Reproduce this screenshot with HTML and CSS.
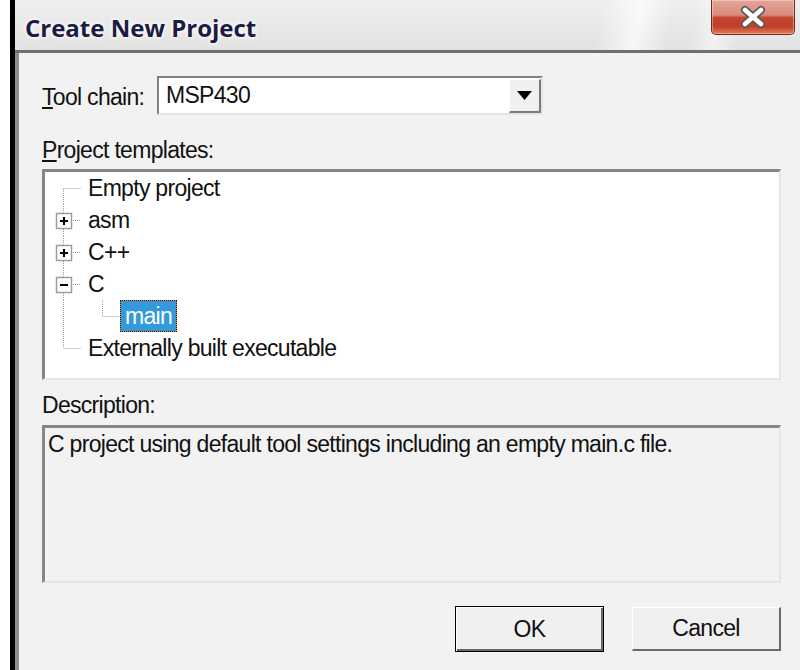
FILE: index.html
```html
<!DOCTYPE html>
<html lang="en">
<head>
<meta charset="utf-8">
<title>Create New Project</title>
<link rel="stylesheet" href="styles.css">
</head>
<body>
<div class="window">
  <div class="titlebar">
    <span class="title">Create New Project</span>
    <button class="close" aria-label="Close">
      <svg width="26" height="24" viewBox="0 0 26 24">
        <path d="M5 5 L21 19 M21 5 L5 19" stroke="#5b5b5b" stroke-width="8" stroke-linecap="round"/>
        <path d="M5 5 L21 19 M21 5 L5 19" stroke="#ffffff" stroke-width="4.5" stroke-linecap="round"/>
      </svg>
    </button>
  </div>
  <div class="separator"></div>
  <div class="content">
    <div class="field-row">
      <label class="label chain-label"><u>T</u>ool chain:</label>
      <div class="combo">
        <span class="combo-value">MSP430</span>
        <span class="combo-btn">
          <svg width="15" height="9" viewBox="0 0 15 9"><polygon points="0,0 15,0 7.5,9" fill="#000"/></svg>
        </span>
      </div>
    </div>

    <div class="label section-label"><u>P</u>roject templates:</div>
    <div class="tree">
      <div class="tree-row">
        <svg class="gutter" width="38" height="32"><path class="dots" d="M18.5 17V32 M18.5 16.5H36"/></svg>
        <span class="node">Empty project</span>
      </div>
      <div class="tree-row">
        <svg class="gutter" width="38" height="32">
          <path class="dots" d="M18.5 0V9 M18.5 25V32 M28 16.5H36"/>
          <rect class="box" x="11.5" y="9.5" width="15" height="15"/>
          <rect x="15" y="16" width="8" height="2"/><rect x="18" y="13" width="2" height="8"/>
        </svg>
        <span class="node">asm</span>
      </div>
      <div class="tree-row">
        <svg class="gutter" width="38" height="32">
          <path class="dots" d="M18.5 0V9 M18.5 25V32 M28 16.5H36"/>
          <rect class="box" x="11.5" y="9.5" width="15" height="15"/>
          <rect x="15" y="16" width="8" height="2"/><rect x="18" y="13" width="2" height="8"/>
        </svg>
        <span class="node">C++</span>
      </div>
      <div class="tree-row">
        <svg class="gutter" width="38" height="32">
          <path class="dots" d="M18.5 0V9 M18.5 25V32 M28 16.5H36"/>
          <rect class="box" x="11.5" y="9.5" width="15" height="15"/>
          <rect x="15" y="16" width="8" height="2"/>
        </svg>
        <span class="node">C</span>
      </div>
      <div class="tree-row">
        <svg class="gutter" width="75" height="32">
          <path class="dots" d="M18.5 0V32 M57.5 0V16 M57.5 16.5H75"/>
        </svg>
        <span class="node selected">main</span>
      </div>
      <div class="tree-row">
        <svg class="gutter" width="38" height="32"><path class="dots" d="M18.5 0V16 M18.5 16.5H36"/></svg>
        <span class="node">Externally built executable</span>
      </div>
    </div>

    <div class="label desc-label">Description:</div>
    <div class="desc">C project using default tool settings including an empty main.c file.</div>

    <div class="buttons">
      <button class="btn default">OK</button>
      <button class="btn">Cancel</button>
    </div>
  </div>
</div>
</body>
</html>
```

FILE: styles.css
```css
* {
  box-sizing: border-box;
}

html,
body {
  margin: 0;
  padding: 0;
  background: #ffffff;
}

body {
  width: 800px;
  height: 670px;
  overflow: hidden;
  font-family: "Liberation Sans", Arial, sans-serif;
  font-size: 23px;
  letter-spacing: -0.7px;
  color: #111111;
}

/* dialog frame */
.window {
  margin-left: 10px;
  height: 670px;
  border-left: 5px solid #000000;
  display: flex;
  flex-direction: column;
}

.titlebar {
  height: 50px;
  flex: none;
  display: flex;
  align-items: flex-start;
  padding-left: 10px;
  background:
    linear-gradient(100deg, rgba(255, 255, 255, 0) 74%, rgba(255, 255, 255, 0.7) 79%, rgba(255, 255, 255, 0) 83%),
    linear-gradient(100deg, rgba(255, 255, 255, 0) 86%, rgba(255, 255, 255, 0.55) 89%, rgba(255, 255, 255, 0) 92%),
    linear-gradient(#efefef, #e2e2e2);
}

.title {
  font-family: "Open Sans", "Noto Sans", sans-serif;
  font-weight: 700;
  font-size: 24px;
  letter-spacing: 0;
  line-height: 30px;
  padding-top: 13px;
  color: #1b1b44;
  text-shadow: 0 0 6px #ffffff, 0 0 3px #ffffff;
}

.close {
  margin-left: auto;
  margin-right: 5px;
  width: 84px;
  height: 35px;
  padding: 0;
  border: 1px solid #6d2b22;
  border-top: none;
  border-radius: 0 0 5px 5px;
  background: linear-gradient(#e4a497, #d98b7d 44%, #c5442f 52%, #c13f2a 78%, #e27b55 100%);
  box-shadow: inset 0 0 0 1px rgba(255, 255, 255, 0.35);
  display: flex;
  align-items: center;
  justify-content: center;
}

.separator {
  height: 3px;
  flex: none;
  background: #6f6f6f;
}

.content {
  flex: 1;
  background: #f2f2f2;
  border-left: 4px solid #8c8c8c;
  padding: 23px 19px 0 23px;
}

/* labels */
.label {
  display: block;
  line-height: 26px;
  white-space: nowrap;
}

.field-row {
  display: flex;
  align-items: center;
  height: 39px;
}

.chain-label {
  flex: none;
  width: 115px;
  padding-top: 3px;
}

.combo {
  width: 386px;
  height: 39px;
  display: flex;
  background: #ffffff;
  border-style: solid;
  border-width: 2px;
  border-color: #828282 #e4e4e4 #e4e4e4 #828282;
}

.combo-value {
  flex: 1;
  line-height: 35px;
  padding-left: 7px;
}

.combo-btn {
  width: 32px;
  margin: 1px 0 0 0;
  background: #f0f0f0;
  border-style: solid;
  border-width: 1px 2px 2px 1px;
  border-color: #ffffff #7a7a7a #7a7a7a #ffffff;
  display: flex;
  align-items: center;
  justify-content: center;
}

.section-label {
  margin-top: 22px;
}

/* template tree */
.tree {
  margin-top: 6px;
  height: 211px;
  background: #ffffff;
  border-style: solid;
  border-width: 3px 2px 2px 3px;
  border-color: #868686 #e5e5e5 #e5e5e5 #868686;
}

.tree-row {
  display: flex;
  height: 32px;
}

.gutter {
  flex: none;
  display: block;
}

.gutter .dots {
  fill: none;
  stroke: #a0a0a0;
  stroke-width: 1;
  stroke-dasharray: 1 1;
}

.gutter .box {
  fill: #ffffff;
  stroke: #9c9c9c;
  stroke-width: 1.5;
}

.node {
  height: 32px;
  line-height: 30px;
  padding: 0 4px;
  border: 1px solid transparent;
  white-space: nowrap;
}

.node.selected {
  color: #ffffff;
  border: 1px dotted #1a1a1a;
  background: linear-gradient(#3399dd, #3399dd) padding-box, #e08a30 border-box;
}

.desc-label {
  margin-top: 12px;
}

.desc {
  margin-top: 7px;
  height: 158px;
  padding: 3px 3px;
  line-height: 26px;
  white-space: nowrap;
  border-style: solid;
  border-width: 3px 2px 2px 3px;
  border-color: #868686 #e5e5e5 #e5e5e5 #868686;
}

/* dialog buttons */
.buttons {
  margin-top: 23px;
  display: flex;
  justify-content: flex-end;
  align-items: center;
  gap: 28px;
}

.btn {
  width: 149px;
  height: 44px;
  padding: 0;
  font: inherit;
  letter-spacing: inherit;
  color: #111111;
  background: #f0f0f0;
  border-style: solid;
  border-width: 1px 2px 2px 1px;
  border-color: #ffffff #6a6a6a #6a6a6a #ffffff;
}

.btn.default {
  height: 46px;
  border: 1px solid #000000;
  box-shadow: inset 1px 1px 0 #ffffff, inset -2px -2px 0 #6a6a6a;
}
```
